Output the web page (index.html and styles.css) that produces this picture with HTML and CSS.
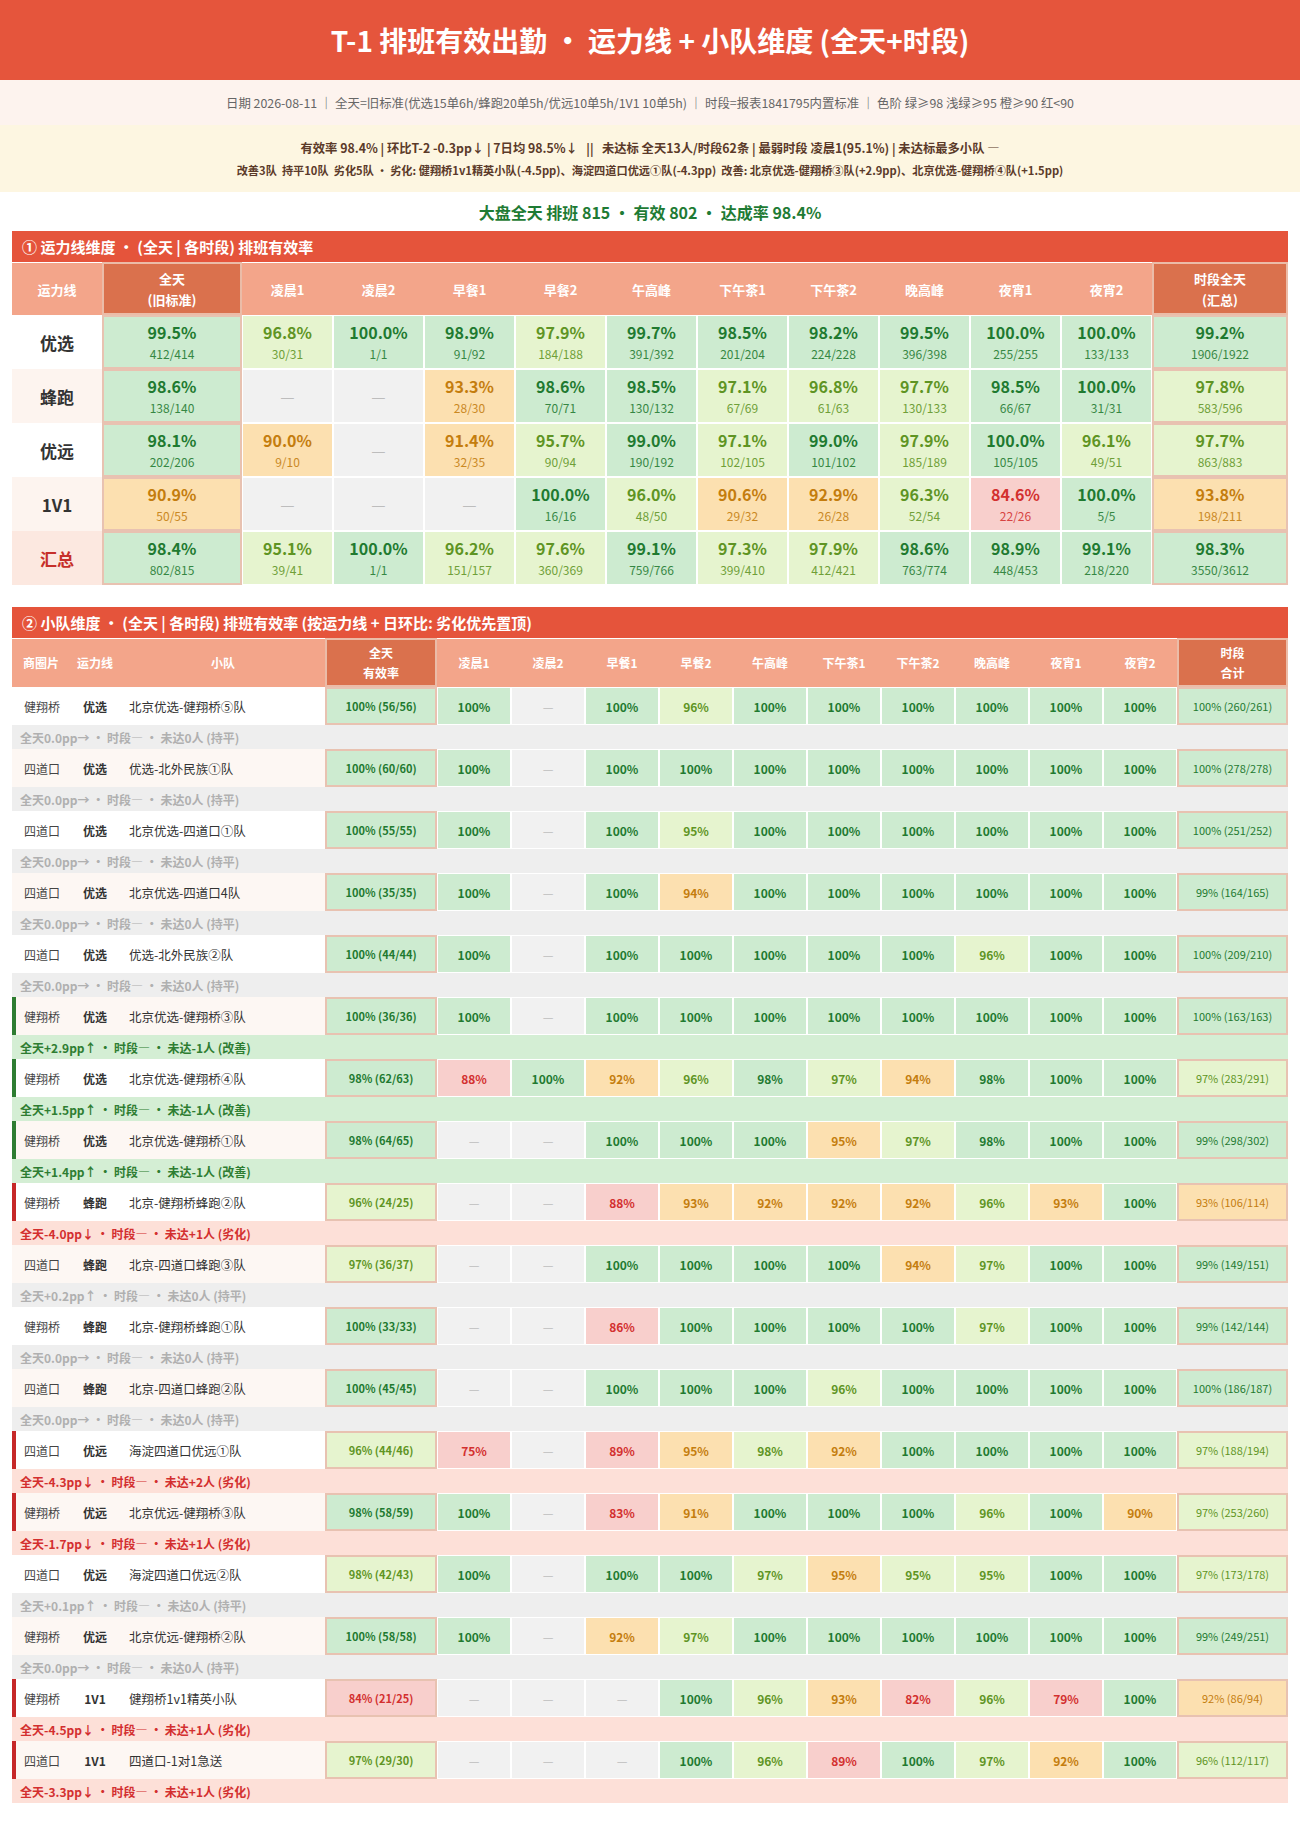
FILE: index.html
```html
<!DOCTYPE html>
<html lang="zh-CN">
<head>
<meta charset="utf-8">
<title>T-1 排班有效出勤</title>
<link rel="stylesheet" href="styles.css">
</head>
<body>
<header class="title">T-1 排班有效出勤 • 运力线 + 小队维度 (全天+时段)</header>
<div class="meta">日期 2026-08-11 ｜ 全天=旧标准(优选15单6h/蜂跑20单5h/优远10单5h/1V1 10单5h) ｜ 时段=报表1841795内置标准 ｜ 色阶 绿≥98 浅绿≥95 橙≥90 红&lt;90</div>
<div class="summary">
  <div class="l1">有效率 98.4% | 环比T-2 -0.3pp↓ | 7日均 98.5%↓ &nbsp;&nbsp;|| &nbsp;&nbsp;未达标 全天13人/时段62条 | 最弱时段 凌晨1(95.1%) | 未达标最多小队 —</div>
  <div class="l2">改善3队 &nbsp;持平10队 &nbsp;劣化5队 · 劣化: 健翔桥1v1精英小队(-4.5pp)、海淀四道口优远①队(-4.3pp) &nbsp;改善: 北京优选-健翔桥③队(+2.9pp)、北京优选-健翔桥④队(+1.5pp)</div>
</div>
<div class="big">大盘全天 排班 815 • 有效 802 • 达成率 98.4%</div>

<main class="wrap">
<section class="sec">
  <div class="sec-head">① 运力线维度 • (全天 | 各时段) 排班有效率</div>
  <table class="t1">
    <colgroup><col class="c-lab"><col class="c-all"><col><col><col><col><col><col><col><col><col><col><col class="c-tot"></colgroup>
    <thead>
      <tr><th>运力线</th><th class="hl">全天<br>(旧标准)</th><th>凌晨1</th><th>凌晨2</th><th>早餐1</th><th>早餐2</th><th>午高峰</th><th>下午茶1</th><th>下午茶2</th><th>晚高峰</th><th>夜宵1</th><th>夜宵2</th><th class="hl">时段全天<br>(汇总)</th></tr>
    </thead>
    <tbody>
      <tr>
        <td class="lab">优选</td>
        <td class="v hl g"><span class="p">99.5%</span><span class="s">412/414</span></td>
        <td class="v lg"><span class="p">96.8%</span><span class="s">30/31</span></td>
        <td class="v g"><span class="p">100.0%</span><span class="s">1/1</span></td>
        <td class="v g"><span class="p">98.9%</span><span class="s">91/92</span></td>
        <td class="v lg"><span class="p">97.9%</span><span class="s">184/188</span></td>
        <td class="v g"><span class="p">99.7%</span><span class="s">391/392</span></td>
        <td class="v g"><span class="p">98.5%</span><span class="s">201/204</span></td>
        <td class="v g"><span class="p">98.2%</span><span class="s">224/228</span></td>
        <td class="v g"><span class="p">99.5%</span><span class="s">396/398</span></td>
        <td class="v g"><span class="p">100.0%</span><span class="s">255/255</span></td>
        <td class="v g"><span class="p">100.0%</span><span class="s">133/133</span></td>
        <td class="v hl g"><span class="p">99.2%</span><span class="s">1906/1922</span></td>
      </tr>
      <tr class="alt">
        <td class="lab">蜂跑</td>
        <td class="v hl g"><span class="p">98.6%</span><span class="s">138/140</span></td>
        <td class="v n">—</td>
        <td class="v n">—</td>
        <td class="v o"><span class="p">93.3%</span><span class="s">28/30</span></td>
        <td class="v g"><span class="p">98.6%</span><span class="s">70/71</span></td>
        <td class="v g"><span class="p">98.5%</span><span class="s">130/132</span></td>
        <td class="v lg"><span class="p">97.1%</span><span class="s">67/69</span></td>
        <td class="v lg"><span class="p">96.8%</span><span class="s">61/63</span></td>
        <td class="v lg"><span class="p">97.7%</span><span class="s">130/133</span></td>
        <td class="v g"><span class="p">98.5%</span><span class="s">66/67</span></td>
        <td class="v g"><span class="p">100.0%</span><span class="s">31/31</span></td>
        <td class="v hl lg"><span class="p">97.8%</span><span class="s">583/596</span></td>
      </tr>
      <tr>
        <td class="lab">优远</td>
        <td class="v hl g"><span class="p">98.1%</span><span class="s">202/206</span></td>
        <td class="v o"><span class="p">90.0%</span><span class="s">9/10</span></td>
        <td class="v n">—</td>
        <td class="v o"><span class="p">91.4%</span><span class="s">32/35</span></td>
        <td class="v lg"><span class="p">95.7%</span><span class="s">90/94</span></td>
        <td class="v g"><span class="p">99.0%</span><span class="s">190/192</span></td>
        <td class="v lg"><span class="p">97.1%</span><span class="s">102/105</span></td>
        <td class="v g"><span class="p">99.0%</span><span class="s">101/102</span></td>
        <td class="v lg"><span class="p">97.9%</span><span class="s">185/189</span></td>
        <td class="v g"><span class="p">100.0%</span><span class="s">105/105</span></td>
        <td class="v lg"><span class="p">96.1%</span><span class="s">49/51</span></td>
        <td class="v hl lg"><span class="p">97.7%</span><span class="s">863/883</span></td>
      </tr>
      <tr class="alt">
        <td class="lab">1V1</td>
        <td class="v hl o"><span class="p">90.9%</span><span class="s">50/55</span></td>
        <td class="v n">—</td>
        <td class="v n">—</td>
        <td class="v n">—</td>
        <td class="v g"><span class="p">100.0%</span><span class="s">16/16</span></td>
        <td class="v lg"><span class="p">96.0%</span><span class="s">48/50</span></td>
        <td class="v o"><span class="p">90.6%</span><span class="s">29/32</span></td>
        <td class="v o"><span class="p">92.9%</span><span class="s">26/28</span></td>
        <td class="v lg"><span class="p">96.3%</span><span class="s">52/54</span></td>
        <td class="v r"><span class="p">84.6%</span><span class="s">22/26</span></td>
        <td class="v g"><span class="p">100.0%</span><span class="s">5/5</span></td>
        <td class="v hl o"><span class="p">93.8%</span><span class="s">198/211</span></td>
      </tr>
      <tr class="sum">
        <td class="lab">汇总</td>
        <td class="v hl g"><span class="p">98.4%</span><span class="s">802/815</span></td>
        <td class="v lg"><span class="p">95.1%</span><span class="s">39/41</span></td>
        <td class="v g"><span class="p">100.0%</span><span class="s">1/1</span></td>
        <td class="v lg"><span class="p">96.2%</span><span class="s">151/157</span></td>
        <td class="v lg"><span class="p">97.6%</span><span class="s">360/369</span></td>
        <td class="v g"><span class="p">99.1%</span><span class="s">759/766</span></td>
        <td class="v lg"><span class="p">97.3%</span><span class="s">399/410</span></td>
        <td class="v lg"><span class="p">97.9%</span><span class="s">412/421</span></td>
        <td class="v g"><span class="p">98.6%</span><span class="s">763/774</span></td>
        <td class="v g"><span class="p">98.9%</span><span class="s">448/453</span></td>
        <td class="v g"><span class="p">99.1%</span><span class="s">218/220</span></td>
        <td class="v hl g"><span class="p">98.3%</span><span class="s">3550/3612</span></td>
      </tr>
    </tbody>
  </table>
</section>

<section class="sec sec2">
  <div class="sec-head">② 小队维度 • (全天 | 各时段) 排班有效率 (按运力线 + 日环比: 劣化优先置顶)</div>
  <table class="t2">
    <colgroup><col class="c-dist"><col class="c-line"><col class="c-team"><col class="c-all2"><col><col><col><col><col><col><col><col><col><col><col class="c-tot2"></colgroup>
    <thead>
      <tr><th class="h-dist">商圈片</th><th class="h-line">运力线</th><th>小队</th><th class="hl">全天<br>有效率</th><th>凌晨1</th><th>凌晨2</th><th>早餐1</th><th>早餐2</th><th>午高峰</th><th>下午茶1</th><th>下午茶2</th><th>晚高峰</th><th>夜宵1</th><th>夜宵2</th><th class="hl">时段<br>合计</th></tr>
    </thead>
    <tbody>
      <tr class="row"><td class="dist">健翔桥</td><td class="line">优选</td><td class="team">北京优选-健翔桥⑤队</td><td class="all g">100% (56/56)</td><td class="g">100%</td><td class="n">—</td><td class="g">100%</td><td class="lg">96%</td><td class="g">100%</td><td class="g">100%</td><td class="g">100%</td><td class="g">100%</td><td class="g">100%</td><td class="g">100%</td><td class="tot g">100% (260/261)</td></tr>
      <tr class="note flat"><td colspan="15">全天0.0pp→ · 时段— · 未达0人 (持平)</td></tr>

      <tr class="row alt"><td class="dist">四道口</td><td class="line">优选</td><td class="team">优选-北外民族①队</td><td class="all g">100% (60/60)</td><td class="g">100%</td><td class="n">—</td><td class="g">100%</td><td class="g">100%</td><td class="g">100%</td><td class="g">100%</td><td class="g">100%</td><td class="g">100%</td><td class="g">100%</td><td class="g">100%</td><td class="tot g">100% (278/278)</td></tr>
      <tr class="note flat"><td colspan="15">全天0.0pp→ · 时段— · 未达0人 (持平)</td></tr>

      <tr class="row"><td class="dist">四道口</td><td class="line">优选</td><td class="team">北京优选-四道口①队</td><td class="all g">100% (55/55)</td><td class="g">100%</td><td class="n">—</td><td class="g">100%</td><td class="lg">95%</td><td class="g">100%</td><td class="g">100%</td><td class="g">100%</td><td class="g">100%</td><td class="g">100%</td><td class="g">100%</td><td class="tot g">100% (251/252)</td></tr>
      <tr class="note flat"><td colspan="15">全天0.0pp→ · 时段— · 未达0人 (持平)</td></tr>

      <tr class="row alt"><td class="dist">四道口</td><td class="line">优选</td><td class="team">北京优选-四道口4队</td><td class="all g">100% (35/35)</td><td class="g">100%</td><td class="n">—</td><td class="g">100%</td><td class="o">94%</td><td class="g">100%</td><td class="g">100%</td><td class="g">100%</td><td class="g">100%</td><td class="g">100%</td><td class="g">100%</td><td class="tot g">99% (164/165)</td></tr>
      <tr class="note flat"><td colspan="15">全天0.0pp→ · 时段— · 未达0人 (持平)</td></tr>

      <tr class="row"><td class="dist">四道口</td><td class="line">优选</td><td class="team">优选-北外民族②队</td><td class="all g">100% (44/44)</td><td class="g">100%</td><td class="n">—</td><td class="g">100%</td><td class="g">100%</td><td class="g">100%</td><td class="g">100%</td><td class="g">100%</td><td class="lg">96%</td><td class="g">100%</td><td class="g">100%</td><td class="tot g">100% (209/210)</td></tr>
      <tr class="note flat"><td colspan="15">全天0.0pp→ · 时段— · 未达0人 (持平)</td></tr>

      <tr class="row alt up"><td class="dist">健翔桥</td><td class="line">优选</td><td class="team">北京优选-健翔桥③队</td><td class="all g">100% (36/36)</td><td class="g">100%</td><td class="n">—</td><td class="g">100%</td><td class="g">100%</td><td class="g">100%</td><td class="g">100%</td><td class="g">100%</td><td class="g">100%</td><td class="g">100%</td><td class="g">100%</td><td class="tot g">100% (163/163)</td></tr>
      <tr class="note good"><td colspan="15">全天+2.9pp↑ · 时段— · 未达-1人 (改善)</td></tr>

      <tr class="row up"><td class="dist">健翔桥</td><td class="line">优选</td><td class="team">北京优选-健翔桥④队</td><td class="all g">98% (62/63)</td><td class="r">88%</td><td class="g">100%</td><td class="o">92%</td><td class="lg">96%</td><td class="g">98%</td><td class="lg">97%</td><td class="o">94%</td><td class="g">98%</td><td class="g">100%</td><td class="g">100%</td><td class="tot lg">97% (283/291)</td></tr>
      <tr class="note good"><td colspan="15">全天+1.5pp↑ · 时段— · 未达-1人 (改善)</td></tr>

      <tr class="row alt up"><td class="dist">健翔桥</td><td class="line">优选</td><td class="team">北京优选-健翔桥①队</td><td class="all g">98% (64/65)</td><td class="n">—</td><td class="n">—</td><td class="g">100%</td><td class="g">100%</td><td class="g">100%</td><td class="o">95%</td><td class="lg">97%</td><td class="g">98%</td><td class="g">100%</td><td class="g">100%</td><td class="tot g">99% (298/302)</td></tr>
      <tr class="note good"><td colspan="15">全天+1.4pp↑ · 时段— · 未达-1人 (改善)</td></tr>

      <tr class="row down"><td class="dist">健翔桥</td><td class="line">蜂跑</td><td class="team">北京-健翔桥蜂跑②队</td><td class="all lg">96% (24/25)</td><td class="n">—</td><td class="n">—</td><td class="r">88%</td><td class="o">93%</td><td class="o">92%</td><td class="o">92%</td><td class="o">92%</td><td class="lg">96%</td><td class="o">93%</td><td class="g">100%</td><td class="tot o">93% (106/114)</td></tr>
      <tr class="note bad"><td colspan="15">全天-4.0pp↓ · 时段— · 未达+1人 (劣化)</td></tr>

      <tr class="row alt"><td class="dist">四道口</td><td class="line">蜂跑</td><td class="team">北京-四道口蜂跑③队</td><td class="all lg">97% (36/37)</td><td class="n">—</td><td class="n">—</td><td class="g">100%</td><td class="g">100%</td><td class="g">100%</td><td class="g">100%</td><td class="o">94%</td><td class="lg">97%</td><td class="g">100%</td><td class="g">100%</td><td class="tot g">99% (149/151)</td></tr>
      <tr class="note flat"><td colspan="15">全天+0.2pp↑ · 时段— · 未达0人 (持平)</td></tr>

      <tr class="row"><td class="dist">健翔桥</td><td class="line">蜂跑</td><td class="team">北京-健翔桥蜂跑①队</td><td class="all g">100% (33/33)</td><td class="n">—</td><td class="n">—</td><td class="r">86%</td><td class="g">100%</td><td class="g">100%</td><td class="g">100%</td><td class="g">100%</td><td class="lg">97%</td><td class="g">100%</td><td class="g">100%</td><td class="tot g">99% (142/144)</td></tr>
      <tr class="note flat"><td colspan="15">全天0.0pp→ · 时段— · 未达0人 (持平)</td></tr>

      <tr class="row alt"><td class="dist">四道口</td><td class="line">蜂跑</td><td class="team">北京-四道口蜂跑②队</td><td class="all g">100% (45/45)</td><td class="n">—</td><td class="n">—</td><td class="g">100%</td><td class="g">100%</td><td class="g">100%</td><td class="lg">96%</td><td class="g">100%</td><td class="g">100%</td><td class="g">100%</td><td class="g">100%</td><td class="tot g">100% (186/187)</td></tr>
      <tr class="note flat"><td colspan="15">全天0.0pp→ · 时段— · 未达0人 (持平)</td></tr>

      <tr class="row down"><td class="dist">四道口</td><td class="line">优远</td><td class="team">海淀四道口优远①队</td><td class="all lg">96% (44/46)</td><td class="r">75%</td><td class="n">—</td><td class="r">89%</td><td class="o">95%</td><td class="lg">98%</td><td class="o">92%</td><td class="g">100%</td><td class="g">100%</td><td class="g">100%</td><td class="g">100%</td><td class="tot lg">97% (188/194)</td></tr>
      <tr class="note bad"><td colspan="15">全天-4.3pp↓ · 时段— · 未达+2人 (劣化)</td></tr>

      <tr class="row alt down"><td class="dist">健翔桥</td><td class="line">优远</td><td class="team">北京优远-健翔桥③队</td><td class="all g">98% (58/59)</td><td class="g">100%</td><td class="n">—</td><td class="r">83%</td><td class="o">91%</td><td class="g">100%</td><td class="g">100%</td><td class="g">100%</td><td class="lg">96%</td><td class="g">100%</td><td class="o">90%</td><td class="tot lg">97% (253/260)</td></tr>
      <tr class="note bad"><td colspan="15">全天-1.7pp↓ · 时段— · 未达+1人 (劣化)</td></tr>

      <tr class="row"><td class="dist">四道口</td><td class="line">优远</td><td class="team">海淀四道口优远②队</td><td class="all lg">98% (42/43)</td><td class="g">100%</td><td class="n">—</td><td class="g">100%</td><td class="g">100%</td><td class="lg">97%</td><td class="o">95%</td><td class="lg">95%</td><td class="lg">95%</td><td class="g">100%</td><td class="g">100%</td><td class="tot lg">97% (173/178)</td></tr>
      <tr class="note flat"><td colspan="15">全天+0.1pp↑ · 时段— · 未达0人 (持平)</td></tr>

      <tr class="row alt"><td class="dist">健翔桥</td><td class="line">优远</td><td class="team">北京优远-健翔桥②队</td><td class="all g">100% (58/58)</td><td class="g">100%</td><td class="n">—</td><td class="o">92%</td><td class="lg">97%</td><td class="g">100%</td><td class="g">100%</td><td class="g">100%</td><td class="g">100%</td><td class="g">100%</td><td class="g">100%</td><td class="tot g">99% (249/251)</td></tr>
      <tr class="note flat"><td colspan="15">全天0.0pp→ · 时段— · 未达0人 (持平)</td></tr>

      <tr class="row down"><td class="dist">健翔桥</td><td class="line">1V1</td><td class="team">健翔桥1v1精英小队</td><td class="all r">84% (21/25)</td><td class="n">—</td><td class="n">—</td><td class="n">—</td><td class="g">100%</td><td class="lg">96%</td><td class="o">93%</td><td class="r">82%</td><td class="lg">96%</td><td class="r">79%</td><td class="g">100%</td><td class="tot o">92% (86/94)</td></tr>
      <tr class="note bad"><td colspan="15">全天-4.5pp↓ · 时段— · 未达+1人 (劣化)</td></tr>

      <tr class="row alt down"><td class="dist">四道口</td><td class="line">1V1</td><td class="team">四道口-1对1急送</td><td class="all lg">97% (29/30)</td><td class="n">—</td><td class="n">—</td><td class="n">—</td><td class="g">100%</td><td class="lg">96%</td><td class="r">89%</td><td class="g">100%</td><td class="lg">97%</td><td class="o">92%</td><td class="g">100%</td><td class="tot lg">96% (112/117)</td></tr>
      <tr class="note bad"><td colspan="15">全天-3.3pp↓ · 时段— · 未达+1人 (劣化)</td></tr>
    </tbody>
  </table>
</section>
</main>
</body>
</html>
```

FILE: styles.css
```css
* { box-sizing: border-box; }

body {
  margin: 0;
  background: #ffffff;
  color: #333333;
  font-family: "Noto Sans CJK SC", "Noto Sans", sans-serif;
}

.title {
  height: 80px;
  background: #e5553c;
  color: #ffffff;
  font-size: 28px;
  font-weight: 700;
  display: flex;
  align-items: center;
  justify-content: center;
}

.meta {
  height: 45px;
  background: #fdf3ee;
  color: #666666;
  font-size: 12.4px;
  display: flex;
  align-items: center;
  justify-content: center;
}

.summary {
  height: 67px;
  background: #fdf6e1;
  color: #5b3a29;
  font-weight: 700;
  display: flex;
  flex-direction: column;
  align-items: center;
  justify-content: center;
  gap: 7px;
}
.summary .l1 { font-size: 12.3px; line-height: 16px; }
.summary .l2 { font-size: 11.2px; line-height: 14px; }

.big {
  height: 39px;
  color: #1e7b34;
  font-size: 16px;
  font-weight: 700;
  display: flex;
  align-items: center;
  justify-content: center;
}

.wrap { padding: 0 12px 24px; }

.sec2 { margin-top: 22px; }

.sec-head {
  height: 31px;
  background: #e5543b;
  color: #ffffff;
  font-size: 15px;
  font-weight: 700;
  padding-left: 10px;
  display: flex;
  align-items: center;
}

table {
  width: 100%;
  table-layout: fixed;
  border-collapse: separate;
  border-spacing: 0;
}

th {
  background: #f3a58a;
  color: #ffffff;
  font-weight: 700;
  padding: 0;
  text-align: center;
  border-top: 1px solid #ffffff;
}
th.hl {
  background: #da714d;
  border: 2px solid #ebbca8;
}

td { padding: 0; text-align: center; }

/* colour scale */
.g  { background: #cdebd0; color: #1f7a30; }
.lg { background: #e6f4cf; color: #5f9424; }
.o  { background: #fce0b0; color: #c47d0e; }
.r  { background: #f8cfcc; color: #d3302f; }
.n  { background: #f1f1f1; color: #bdbdbd; font-weight: 400 !important; }

/* ---------- table 1 ---------- */
.t1 .c-lab { width: 90px; }
.t1 .c-all { width: 140px; }
.t1 .c-tot { width: 136px; }
.t1 thead tr { height: 53px; }
.t1 th { font-size: 13px; line-height: 21px; }
.t1 tbody tr { height: 54px; }

.t1 .lab {
  background: #ffffff;
  font-size: 17px;
  font-weight: 700;
  color: #333333;
}
.t1 tr.alt .lab { background: #fdf4ef; }
.t1 tr.sum .lab { background: #fce8e0; color: #c62f2a; }

.t1 .v { border: 1px solid #ffffff; }
.t1 .v.hl { border: 2px solid #e8c2b1; }
.t1 .v .p {
  display: block;
  font-size: 16px;
  font-weight: 700;
  line-height: 20px;
}
.t1 .v .s {
  display: block;
  font-size: 12px;
  line-height: 16px;
  margin-top: 4px;
  opacity: 0.88;
}

/* ---------- table 2 ---------- */
.t2 .c-dist { width: 57px; }
.t2 .c-line { width: 52px; }
.t2 .c-team { width: 204px; }
.t2 .c-all2 { width: 112px; }
.t2 .c-tot2 { width: 111px; }
.t2 thead tr { height: 49px; }
.t2 th { font-size: 12px; line-height: 20px; }
.t2 th.h-dist { text-align: left; padding-left: 11px; }
.t2 th.h-line { text-align: left; padding-left: 8px; }

.t2 tr.row { height: 38px; }
.t2 tr.row td {
  border: 1px solid #ffffff;
  font-size: 12px;
  font-weight: 700;
}
.t2 tr.row td.dist,
.t2 tr.row td.line,
.t2 tr.row td.team {
  background: #ffffff;
  border: none;
  color: #444444;
  font-weight: 400;
  font-size: 12px;
}
.t2 tr.row.alt td.dist,
.t2 tr.row.alt td.line,
.t2 tr.row.alt td.team { background: #fdf7f3; }
.t2 td.dist { text-align: left; padding-left: 12px; }
.t2 td.line { font-weight: 700 !important; color: #333333 !important; }
.t2 td.team { text-align: left; padding-left: 8px; font-size: 12.5px !important; color: #333333 !important; }
.t2 tr.up td.dist { box-shadow: inset 4px 0 0 #2e7d32; }
.t2 tr.down td.dist { box-shadow: inset 4px 0 0 #c62828; }

.t2 tr.row td.all {
  border: 2px solid #e8c2b1;
  font-size: 11px;
  font-weight: 600;
}
.t2 tr.row td.tot {
  border: 2px solid #e8c2b1;
  font-size: 11px;
  font-weight: 400;
}

.t2 tr.note { height: 24px; }
.t2 tr.note td {
  text-align: left;
  padding-left: 8px;
  font-size: 12px;
  font-weight: 700;
}
.t2 tr.note.flat td { background: #eeeeee; color: #b0b0b0; }
.t2 tr.note.good td { background: #d4eed4; color: #2e7d32; }
.t2 tr.note.bad td { background: #fde0d8; color: #d32f2f; }
```
